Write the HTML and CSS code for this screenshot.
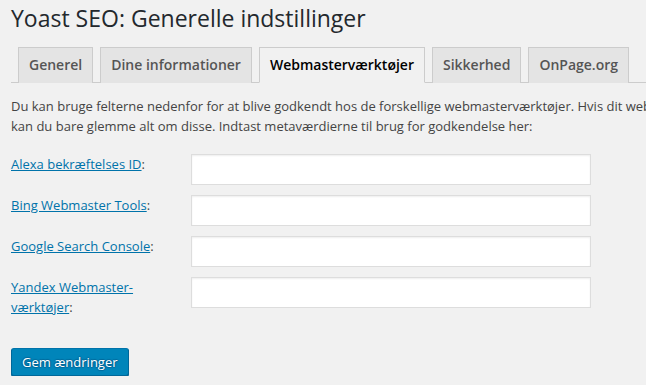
FILE: index.html
```html
<!DOCTYPE html>
<html>
  <head>
    <meta charset="utf-8">
    <meta name="viewport" content="width=device-width, initial-scale=1">
    <title>Yoast SEO: Generelle indstillinger</title>
    <link rel="stylesheet" href="styles.css">
  </head>
  <body>
    <div class="wrap">
      <h1>Yoast SEO: Generelle indstillinger</h1>

      <nav class="tabs">
        <a class="tab" href="#general">Generel</a>
        <a class="tab" href="#knowledge-graph">Dine informationer</a>
        <a class="tab active" href="#webmaster-tools">Webmasterværktøjer</a>
        <a class="tab" href="#security">Sikkerhed</a>
        <a class="tab" href="#onpage">OnPage.org</a>
      </nav>

      <form class="webmaster">
        <p class="intro">Du kan bruge felterne nedenfor for at blive godkendt hos de forskellige webmasterværktøjer. Hvis dit websted allerede er godkendt,<br>kan du bare glemme alt om disse. Indtast metaværdierne til brug for godkendelse her:</p>

        <div class="row">
          <label for="alexaverify"><a href="#">Alexa bekræftelses ID</a>:</label>
          <input id="alexaverify" type="text">
        </div>
        <div class="row">
          <label for="msverify"><a href="#">Bing Webmaster Tools</a>:</label>
          <input id="msverify" type="text">
        </div>
        <div class="row">
          <label for="googleverify"><a href="#">Google Search Console</a>:</label>
          <input id="googleverify" type="text">
        </div>
        <div class="row">
          <label for="yandexverify"><a href="#">Yandex Webmaster-værktøjer</a>:</label>
          <input id="yandexverify" type="text">
        </div>

        <button class="primary" type="submit">Gem ændringer</button>
      </form>
    </div>
  </body>
</html>
```

FILE: styles.css
```css
body {
  margin: 0;
  background: #f1f1f1;
  color: #444;
  font-family: "Open Sans", sans-serif;
  font-size: 13px;
}

.wrap {
  padding-left: 11px;
}

h1 {
  margin: 0;
  padding-top: 4px;
  font-size: 23px;
  font-weight: 400;
  line-height: 29px;
  color: #23282d;
}

.tabs {
  display: flex;
  margin-top: 14px;
  border-bottom: 1px solid #ccc;
}

.tab {
  margin-left: 7px;
  margin-bottom: -1px;
  padding: 5px 10px;
  border: 1px solid #ccc;
  border-bottom: none;
  background: #e4e4e4;
  color: #555;
  font-size: 14px;
  font-weight: 600;
  line-height: 24px;
  text-decoration: none;
}

.tab.active {
  background: #f1f1f1;
  border-bottom: 1px solid #f1f1f1;
  color: #000;
}

.intro {
  margin: 13px 0 18px;
  line-height: 20px;
  white-space: nowrap;
  overflow: hidden;
}

.row {
  display: flex;
  align-items: flex-start;
  margin-bottom: 10px;
}

.row label {
  width: 160px;
  margin-right: 20px;
  font-size: 13px;
  line-height: 20px;
}

.row a {
  color: #0073aa;
}

.row input {
  box-sizing: border-box;
  width: 400px;
  height: 31px;
  margin: 0;
  padding: 3px 5px;
  border: 1px solid #ddd;
  box-shadow: inset 0 1px 2px rgba(0, 0, 0, 0.07);
  background: #fff;
  font-family: inherit;
  font-size: 14px;
}

.primary {
  margin-top: 21px;
  height: 28px;
  padding: 0 10px 1px;
  border: 1px solid;
  border-color: #0073aa #006799 #006799;
  border-radius: 3px;
  background: #0085ba;
  box-shadow: 0 1px 0 #006799;
  color: #fff;
  text-shadow: 0 -1px 1px #006799, 1px 0 1px #006799, 0 1px 1px #006799, -1px 0 1px #006799;
  font-family: inherit;
  font-size: 13px;
  line-height: 26px;
}
```
